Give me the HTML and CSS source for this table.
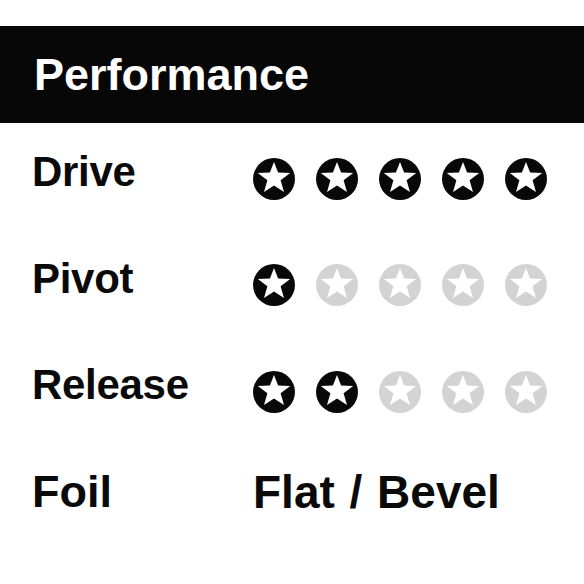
FILE: index.html
```html
<!DOCTYPE html>
<html>
<head>
<meta charset="utf-8">
<link rel="stylesheet" href="styles.css">
</head>
<body>
<svg class="defs" width="0" height="0" aria-hidden="true">
  <symbol id="star" viewBox="-21 -21 42 42">
    <circle cx="0" cy="0" r="21" fill="currentColor"/>
    <polygon fill="#fff" points="0,-17 4.1,-6.6 16.2,-6.1 6.6,1.2 10,12.9 0,6.4 -10,12.9 -6.6,1.2 -16.2,-6.1 -4.1,-6.6"/>
  </symbol>
</svg>
<div class="card">
  <div class="header">Performance</div>
  <div class="rows">
    <div class="row">
      <div class="label">Drive</div>
      <div class="stars">
        <svg class="star on"><use href="#star"/></svg>
        <svg class="star on"><use href="#star"/></svg>
        <svg class="star on"><use href="#star"/></svg>
        <svg class="star on"><use href="#star"/></svg>
        <svg class="star on"><use href="#star"/></svg>
      </div>
    </div>
    <div class="row">
      <div class="label">Pivot</div>
      <div class="stars">
        <svg class="star on"><use href="#star"/></svg>
        <svg class="star off"><use href="#star"/></svg>
        <svg class="star off"><use href="#star"/></svg>
        <svg class="star off"><use href="#star"/></svg>
        <svg class="star off"><use href="#star"/></svg>
      </div>
    </div>
    <div class="row">
      <div class="label">Release</div>
      <div class="stars">
        <svg class="star on"><use href="#star"/></svg>
        <svg class="star on"><use href="#star"/></svg>
        <svg class="star off"><use href="#star"/></svg>
        <svg class="star off"><use href="#star"/></svg>
        <svg class="star off"><use href="#star"/></svg>
      </div>
    </div>
    <div class="row foil">
      <div class="label">Foil</div>
      <div class="value">Flat / Bevel</div>
    </div>
  </div>
</div>
</body>
</html>
```

FILE: styles.css
```css
html, body {
  margin: 0;
  padding: 0;
  background: #ffffff;
}
body {
  width: 584px;
  height: 584px;
  overflow: hidden;
  font-family: "Liberation Sans", Arial, sans-serif;
  font-weight: bold;
  color: #0a0a0a;
}
.defs {
  position: absolute;
  width: 0;
  height: 0;
}
.card {
  padding-top: 26px;
}
.header {
  background: #070707;
  color: #ffffff;
  height: 97px;
  display: flex;
  align-items: center;
  padding-left: 34px;
  font-size: 45px;
}
.rows {
  display: grid;
  row-gap: 8.5px;
}
.row {
  height: 98px;
  display: grid;
  grid-template-columns: 221px 1fr;
  align-items: center;
  padding-left: 32px;
}
.label, .value {
  font-size: 42px;
  letter-spacing: -0.3px;
}
.foil .label {
  font-size: 45px;
  letter-spacing: 0;
}
.foil .value {
  font-size: 46px;
  letter-spacing: 0;
  word-spacing: 2px;
}
.stars {
  display: flex;
  gap: 21px;
  margin-top: 13px;
}
.star {
  width: 42px;
  height: 42px;
  display: block;
}
.star.on {
  color: #080808;
}
.star.off {
  color: #d3d3d3;
}
```
